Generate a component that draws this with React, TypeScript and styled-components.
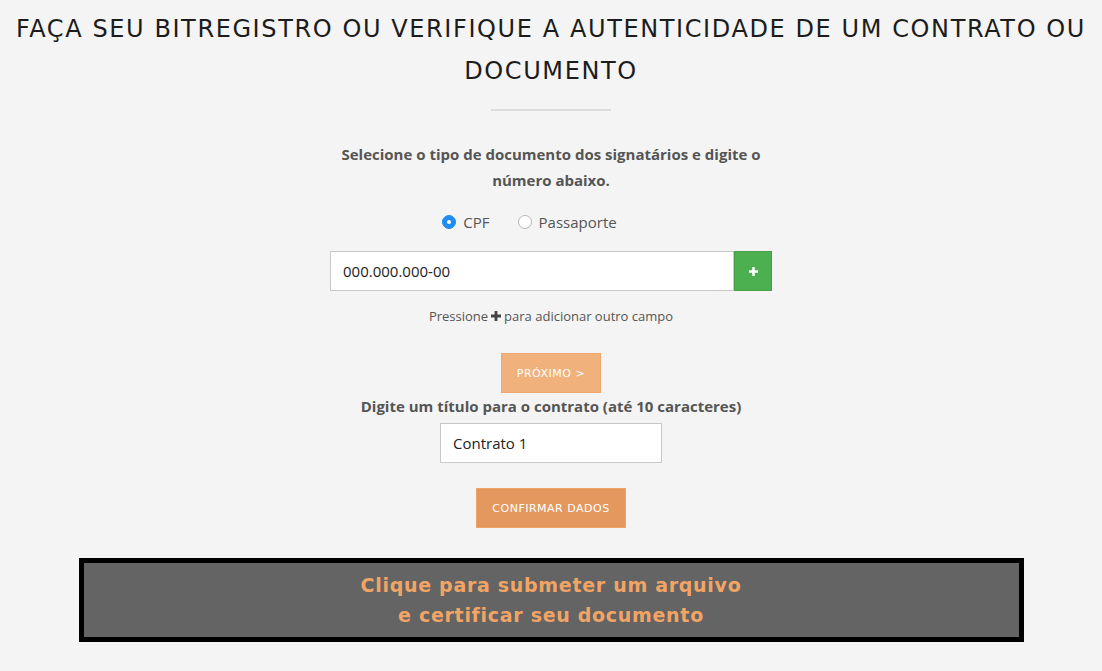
import React from "react";
import styled, { createGlobalStyle } from "styled-components";

const GlobalStyle = createGlobalStyle`
  html, body { margin: 0; padding: 0; background: #f4f4f4; }
  body { font-family: "Open Sans", "Liberation Sans", sans-serif; }
  * { box-sizing: border-box; }
`;

const Page = styled.div`
  display: flex;
  flex-direction: column;
  align-items: center;
  width: 1102px;
  padding: 8px 0 30px;
`;

const Title = styled.h1`
  margin: 0;
  width: 1084px;
  text-align: center;
  font-family: "DejaVu Sans", sans-serif;
  font-weight: 400;
  font-size: 24px;
  line-height: 42px;
  letter-spacing: 1.6px;
  color: #1c1c1c;
`;

const Divider = styled.hr`
  margin: 17px 0 0;
  width: 120px;
  height: 2px;
  border: none;
  background: #dcdcdc;
`;

const Lead = styled.p`
  margin: 30px 0 0;
  max-width: 442px;
  text-align: center;
  font-weight: 700;
  font-size: 15px;
  line-height: 26px;
  color: #555;
`;

const RadioRow = styled.div`
  margin-top: 17px;
  height: 24px;
  display: flex;
  align-items: center;
  gap: 28px;
  padding-right: 43px;
`;

const RadioLabel = styled.label`
  display: flex;
  align-items: center;
  gap: 7px;
  font-size: 15px;
  color: #555;
`;

const RadioDot = styled.span<{ $checked?: boolean }>`
  width: 14px;
  height: 14px;
  border-radius: 50%;
  display: inline-flex;
  align-items: center;
  justify-content: center;
  background: ${(p) => (p.$checked ? "#1e8cf0" : "#fff")};
  border: 1px solid ${(p) => (p.$checked ? "#1e8cf0" : "#b5b5b5")};
  &::after {
    content: "";
    width: 4px;
    height: 4px;
    border-radius: 50%;
    background: ${(p) => (p.$checked ? "#fff" : "transparent")};
  }
`;

const InputGroup = styled.div`
  margin-top: 17px;
  display: flex;
  width: 442px;
  height: 40px;
`;

const TextInput = styled.div<{ $width?: number }>`
  flex: ${(p) => (p.$width ? "none" : "1")};
  width: ${(p) => (p.$width ? `${p.$width}px` : "auto")};
  height: 40px;
  background: #fff;
  border: 1px solid #c8c8c8;
  display: flex;
  align-items: center;
  padding-left: 12px;
  font-size: 15px;
  color: #222;
`;

const AddButton = styled.div`
  width: 38px;
  height: 40px;
  background: #4caf50;
  border: 1px solid #45a049;
  display: flex;
  align-items: center;
  justify-content: center;
`;

const Hint = styled.p`
  margin: 15px 0 0;
  font-size: 13px;
  line-height: 20px;
  color: #555;
  display: flex;
  align-items: center;
  gap: 3px;
`;

const ActionButton = styled.div<{ $tone: "light" | "dark"; $mt: number }>`
  margin-top: ${(p) => p.$mt}px;
  height: 40px;
  padding: 0 15px;
  display: flex;
  align-items: center;
  justify-content: center;
  font-family: "DejaVu Sans", sans-serif;
  font-size: 11px;
  letter-spacing: 0.5px;
  color: #fff;
  background: ${(p) => (p.$tone === "light" ? "#f1b17d" : "#e4985e")};
  border: 1px solid ${(p) => (p.$tone === "light" ? "#f0a56a" : "#f0a362")};
`;

const Label = styled.p`
  margin: 0;
  font-weight: 700;
  font-size: 15px;
  line-height: 26px;
  color: #555;
`;

const UploadBox = styled.div`
  margin-top: 30px;
  width: 945px;
  height: 84px;
  background: #646464;
  border: 5px solid #000;
  display: flex;
  align-items: center;
  justify-content: center;
  text-align: center;
  font-family: "DejaVu Sans", sans-serif;
  font-weight: 700;
  font-size: 19px;
  line-height: 30px;
  letter-spacing: 0.7px;
  color: #f2a464;
`;

const Plus = ({ size, color }: { size: number; color: string }) => (
  <svg width={size} height={size} viewBox="0 0 10 10">
    <path d="M3.6 0h2.8v3.6H10v2.8H6.4V10H3.6V6.4H0V3.6h3.6z" fill={color} />
  </svg>
);

export default function App() {
  return (
    <>
      <GlobalStyle />
      <Page>
        <Title>
          FAÇA SEU BITREGISTRO OU VERIFIQUE A AUTENTICIDADE DE UM CONTRATO OU DOCUMENTO
        </Title>
        <Divider />
        <Lead>Selecione o tipo de documento dos signatários e digite o número abaixo.</Lead>
        <RadioRow>
          <RadioLabel>
            <RadioDot $checked />
            CPF
          </RadioLabel>
          <RadioLabel>
            <RadioDot />
            Passaporte
          </RadioLabel>
        </RadioRow>
        <InputGroup>
          <TextInput>000.000.000-00</TextInput>
          <AddButton>
            <Plus size={9} color="#fff" />
          </AddButton>
        </InputGroup>
        <Hint>
          Pressione <Plus size={10} color="#444" /> para adicionar outro campo
        </Hint>
        <ActionButton $tone="light" $mt={27}>PRÓXIMO &gt;</ActionButton>
        <Label>Digite um título para o contrato (até 10 caracteres)</Label>
        <TextInput $width={222} style={{ marginTop: 4 }}>Contrato 1</TextInput>
        <ActionButton $tone="dark" $mt={25}>CONFIRMAR DADOS</ActionButton>
        <UploadBox>
          Clique para submeter um arquivo
          <br />e certificar seu documento
        </UploadBox>
      </Page>
    </>
  );
}
